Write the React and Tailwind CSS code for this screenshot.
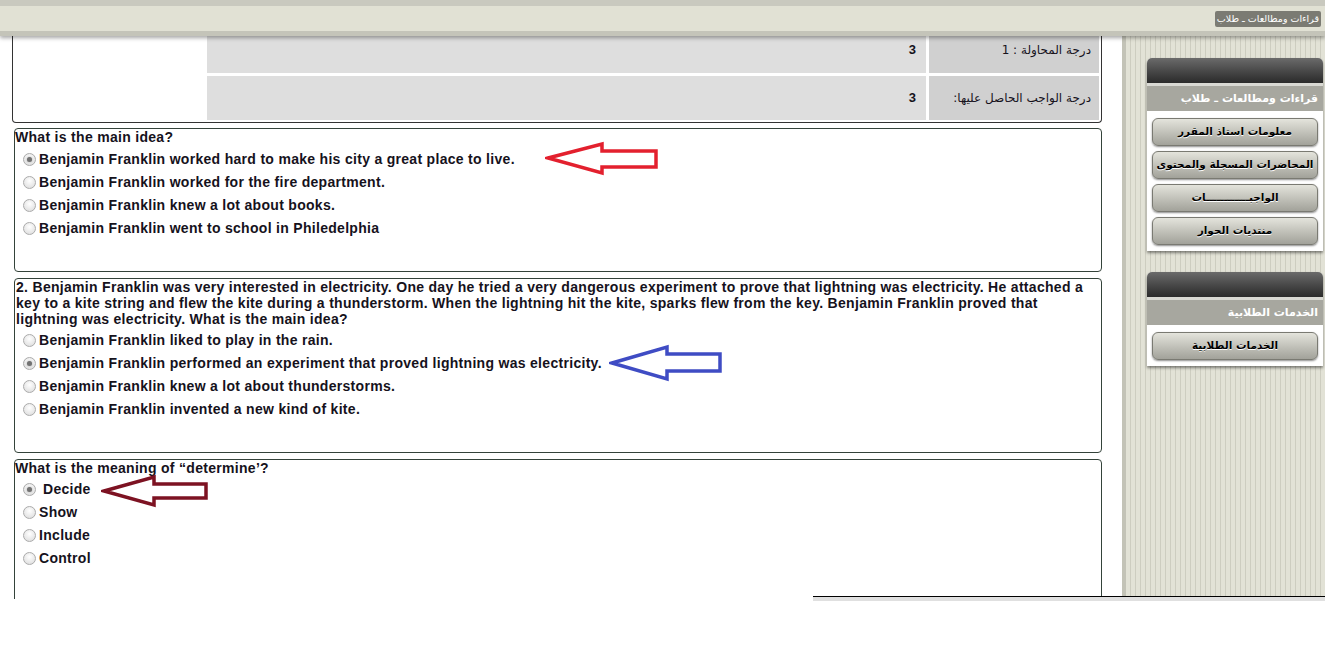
import React from "react";

const q1 = [
  "Benjamin Franklin worked hard to make his city a great place to live.",
  "Benjamin Franklin worked for the fire department.",
  "Benjamin Franklin knew a lot about books.",
  "Benjamin Franklin went to school in Philedelphia",
];

const q2 = [
  "Benjamin Franklin liked to play in the rain.",
  "Benjamin Franklin performed an experiment that proved lightning was electricity.",
  "Benjamin Franklin knew a lot about thunderstorms.",
  "Benjamin Franklin invented a new kind of kite.",
];

const q3 = ["Decide", "Show", "Include", "Control"];

const menu = [
  "معلومات استاذ المقرر",
  "المحاضرات المسجلة والمحتوى",
  "الواجبــــــــــــات",
  "منتديات الحوار",
];

function Radio({ checked }) {
  return (
    <span className="inline-flex h-[13px] w-[13px] shrink-0 items-center justify-center rounded-full border border-[#ababab] bg-[radial-gradient(circle_at_50%_35%,#ffffff,#d9d9d9)]">
      {checked && <span className="h-[5px] w-[5px] rounded-full bg-[#727272] shadow-[0_0_2px_#9a9a9a]" />}
    </span>
  );
}

function Option({ text, checked, extra }) {
  return (
    <div className="flex h-[23px] items-center pl-[8px]">
      <Radio checked={checked} />
      <span className={extra ? "ml-[7px]" : "ml-[3px]"}>{text}</span>
    </div>
  );
}

function Arrow({ className, color, points, w, h }) {
  return (
    <svg className={className} width={w} height={h} viewBox={`0 0 ${w} ${h}`}>
      <polygon points={points} fill="none" stroke={color} strokeWidth="3.5" strokeLinejoin="miter" />
    </svg>
  );
}

function Panel({ title, items }) {
  return (
    <div className="ml-[21px] w-[176px] rounded-t-[5px] bg-white shadow-[0_2px_3px_rgba(0,0,0,0.45)]">
      <div className="h-[25px] rounded-t-[5px] bg-gradient-to-b from-[#6b6b6b] to-[#2b2b2b]" />
      <div className="h-[3px] bg-[#d9d9d3]" />
      <div dir="rtl" className="h-[25px] bg-[#a7a79f] pr-[5px] text-[11px] font-bold leading-[25px] text-white">
        {title}
      </div>
      <div className="flex flex-col gap-[5px] pb-[6px] pt-[7px]">
        {items.map((t) => (
          <div
            key={t}
            dir="rtl"
            className="mx-[5px] flex h-[28px] items-center justify-center whitespace-nowrap rounded-[6px] border border-[#7a7a72] bg-gradient-to-b from-[#e4e4dc] to-[#a2a29a] text-[10.5px] font-bold text-black shadow-[0_1px_2px_rgba(0,0,0,0.45)] [text-shadow:0_1px_0_#ffffff]"
          >
            {t}
          </div>
        ))}
      </div>
    </div>
  );
}

export default function App() {
  return (
    <div className="relative h-[654px] w-full overflow-hidden bg-white font-['Liberation_Sans',Arial,sans-serif] text-[14px] font-bold tracking-[0.3px] text-[#16121c]">
      {/* top bar */}
      <div className="relative z-10 h-[36px] shadow-[0_2px_4px_rgba(0,0,0,0.35)]">
        <div className="h-[6px] bg-[#c9c9bf]" />
        <div className="flex h-[25px] items-center justify-end bg-[#e1e1d4] pr-[4px]">
          <span dir="rtl" className="rounded-[2px] bg-[#7b7b73] px-[2px] font-['DejaVu_Sans',sans-serif] text-[9.5px] font-normal leading-[16px] tracking-normal text-white">
            قراءات ومطالعات ـ طلاب
          </span>
        </div>
        <div className="h-[5px] bg-[#c4c4b9]" />
      </div>

      <div className="flex items-start">
        {/* main column */}
        <div className="h-[563px] w-[1122px] shrink-0 overflow-hidden">
          <div className="-mt-[9px] ml-[12px] w-[1090px] rounded-b-[4px] border-x border-b border-[#333333] pb-[2px]">
            <div className="flex flex-col gap-[3px] font-['DejaVu_Sans',sans-serif] text-[12px] tracking-normal">
              <div className="ml-auto mr-[2px] flex h-[46px] w-[892px]">
                <div className="flex flex-1 items-center justify-end bg-[#dedede] pr-[10px] font-['Liberation_Sans',Arial,sans-serif] text-[13px]">3</div>
                <div dir="rtl" className="ml-[3px] flex w-[170px] items-center bg-[#d0d0d0] pr-[8px] font-normal">درجة المحاولة : 1</div>
              </div>
              <div className="ml-auto mr-[2px] flex h-[44px] w-[892px]">
                <div className="flex flex-1 items-center justify-end bg-[#dedede] pr-[10px] font-['Liberation_Sans',Arial,sans-serif] text-[13px]">3</div>
                <div dir="rtl" className="ml-[3px] flex w-[170px] items-center bg-[#d0d0d0] pr-[8px] font-normal">درجة الواجب الحاصل عليها:</div>
              </div>
            </div>
          </div>

          <div className="relative ml-[14px] mt-[5px] h-[144px] w-[1088px] rounded-[4px] border border-[#34433a]">
            <div className="leading-[16px]">What is the main idea?</div>
            <div className="mt-[3px]">
              {q1.map((t, i) => (
                <Option key={t} text={t} checked={i === 0} />
              ))}
            </div>
            <Arrow
              className="absolute left-[530px] top-[12px]"
              color="#e3202e"
              w={114}
              h={35}
              points="3,17 57,3 57,10 111,10 111,26 57,26 57,32"
            />
          </div>

          <div className="relative ml-[14px] mt-[6px] h-[175px] w-[1088px] rounded-[4px] border border-[#34433a]">
            <div className="whitespace-nowrap pl-[1px] leading-[16px]">
              2. Benjamin Franklin was very interested in electricity. One day he tried a very dangerous experiment to prove that lightning was electricity. He attached a
              <br />
              key to a kite string and flew the kite during a thunderstorm. When the lightning hit the kite, sparks flew from the key. Benjamin Franklin proved that
              <br />
              lightning was electricity. What is the main idea?
            </div>
            <div className="mt-[2px]">
              {q2.map((t, i) => (
                <Option key={t} text={t} checked={i === 1} />
              ))}
            </div>
            <Arrow
              className="absolute left-[594px] top-[65px]"
              color="#3f4cc4"
              w={114}
              h={38}
              points="3,19 58,3 58,10 111,10 111,27 58,27 58,35"
            />
          </div>

          <div className="relative ml-[14px] mt-[6px] h-[200px] w-[1088px] rounded-[4px] border border-[#34433a]">
            <div className="leading-[16px]">What is the meaning of “determine’?</div>
            <div className="mt-[2px]">
              {q3.map((t, i) => (
                <Option key={t} text={t} checked={i === 0} extra={i === 0} />
              ))}
            </div>
            <Arrow
              className="absolute left-[86px] top-[14px]"
              color="#7d1222"
              w={108}
              h={34}
              points="3,17 53,3 53,10 105,10 105,24 53,24 53,31"
            />
          </div>
        </div>

        {/* sidebar */}
        <div className="h-[560px] flex-1 border-l-[4px] border-[#c3c3b7] bg-[repeating-linear-gradient(90deg,#e2e2d6_0px,#e2e2d6_4px,#cdcdc0_4px,#cdcdc0_5px)] pt-[22px] font-['DejaVu_Sans',sans-serif] tracking-normal">
          <Panel title="قراءات ومطالعات ـ طلاب" items={menu} />
          <div className="h-[21px]" />
          <Panel title="الخدمات الطلابية" items={["الخدمات الطلابية"]} />
        </div>
      </div>

      {/* bottom frame edge */}
      <div className="absolute left-[813px] right-0 top-[596px] h-[5px] border-t border-black bg-[#e0e0e0]" />
    </div>
  );
}
